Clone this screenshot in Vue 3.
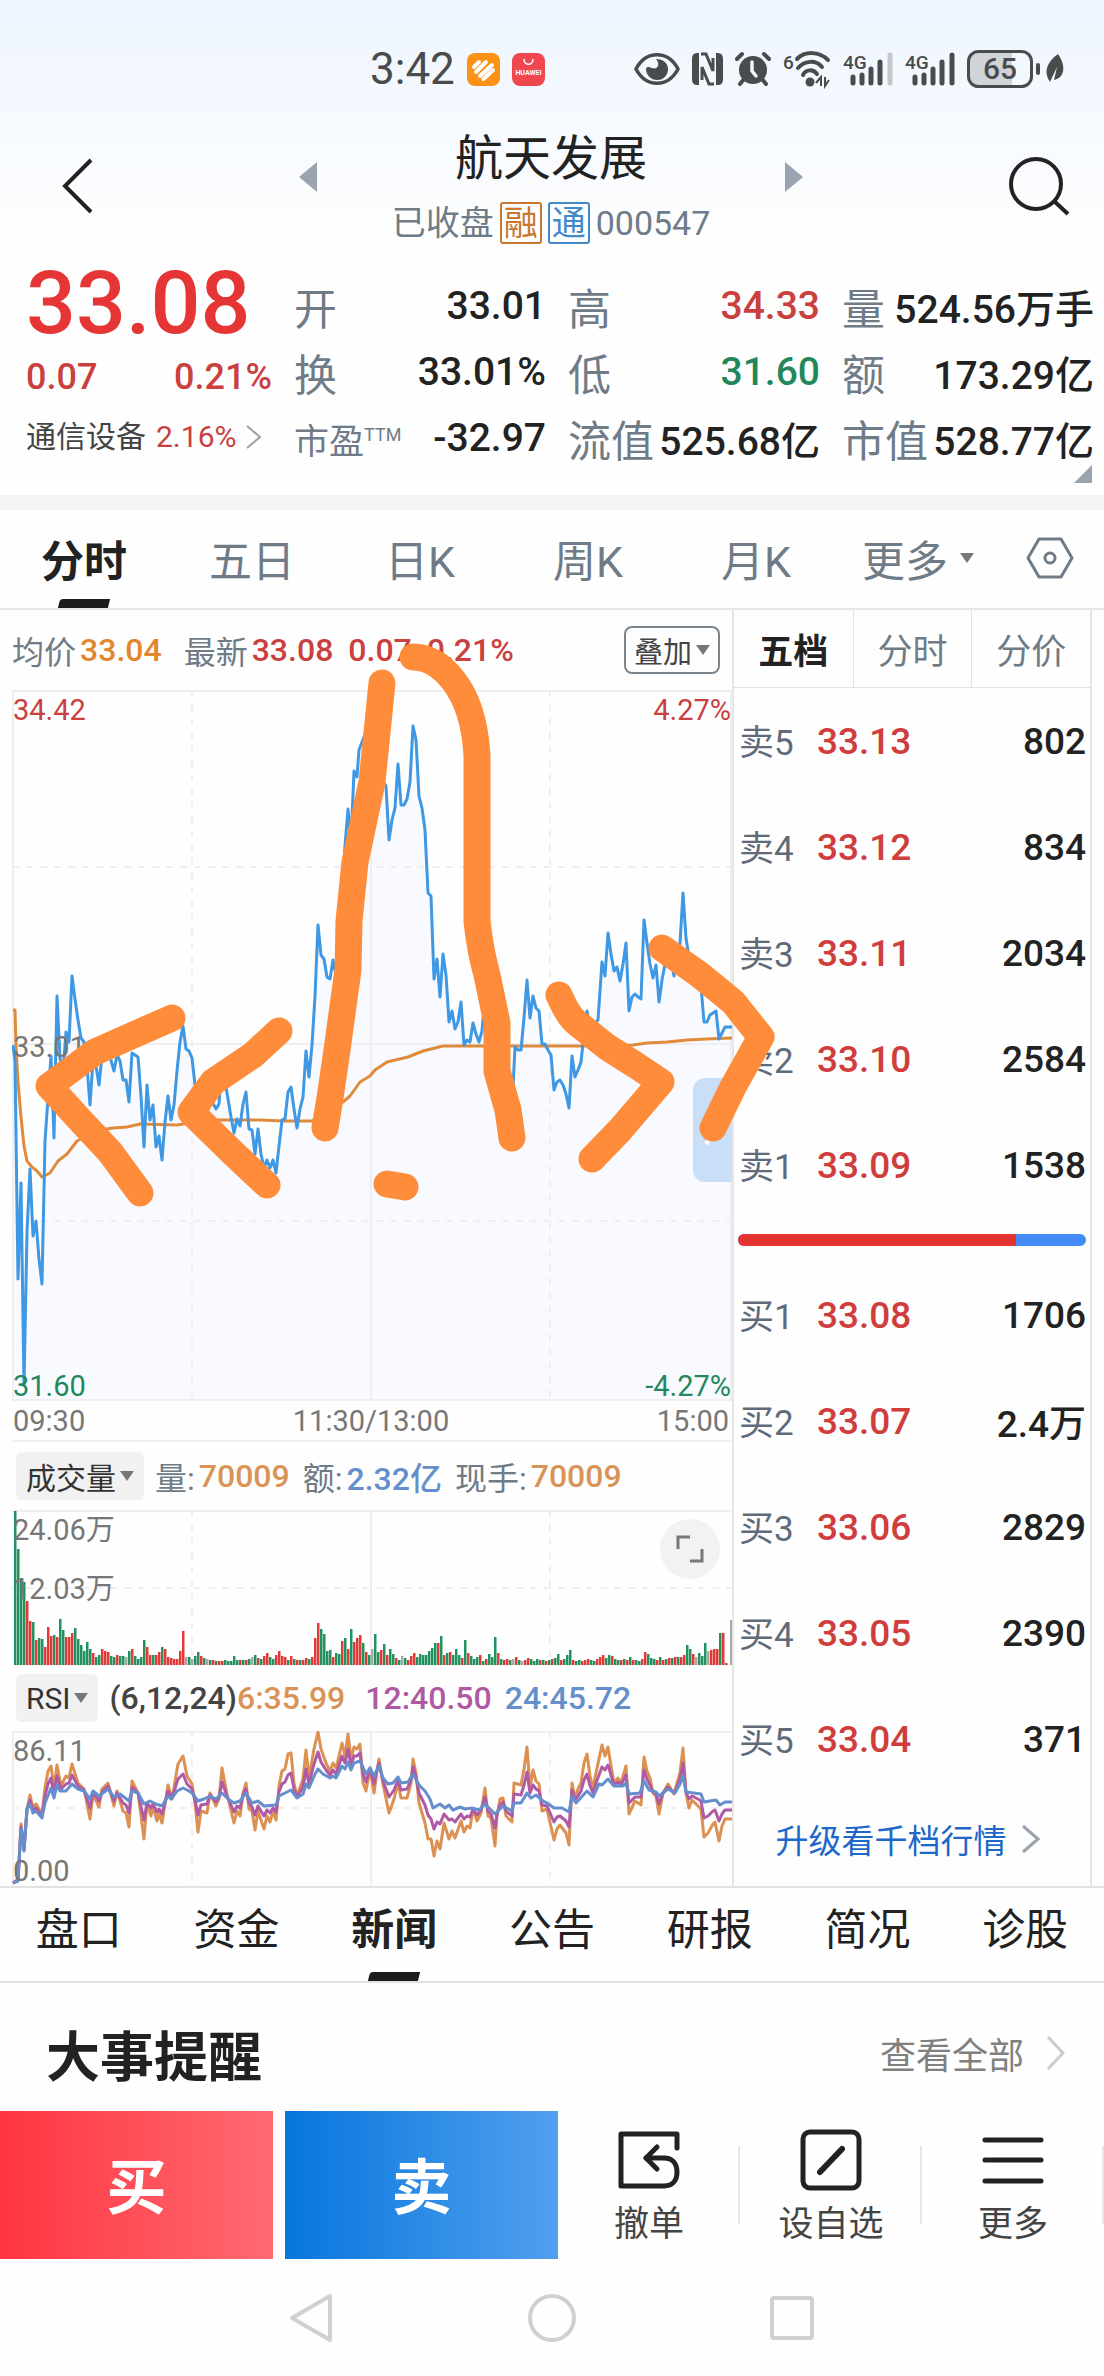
<template>
  <div class="page">
    <div class="top-area">
      <div class="status-bar">
        <div class="status-left">
          <span class="clock">3:42</span>
          <svg class="app-icon" width="33" height="33" viewBox="0 0 33 33">
            <rect width="33" height="33" rx="8" fill="#fb9214" />
            <path d="M7 14 L12 9 M9 19 L19 9 M13 23 L25 12 M16.500 26 L26 17" fill="none" stroke="#fff" stroke-width="4" stroke-linecap="round" />
          </svg>
          <svg class="app-icon" width="33" height="33" viewBox="0 0 33 33">
            <rect width="33" height="33" rx="8" fill="#f04650" />
            <path d="M12 6 C12 13 21 13 21 6" fill="none" stroke="#fff" stroke-width="1.500" />
            <text x="16.500" y="22" text-anchor="middle" font-size="7" font-weight="700" fill="#fff">HUAWEI</text>
          </svg>
        </div>
        <div class="status-right">
          <svg width="46" height="34" viewBox="0 0 46 34">
            <path d="M2 17 C12 -2 34 -2 44 17 C34 36 12 36 2 17 Z" fill="none" stroke="#4a4b4d" stroke-width="3.500" />
            <path d="M22 7 C27 13 23 18 18 16 C15 15 13 14 12 17 C12 23 17 28 23 28 C30 28 34 23 34 17 C34 11 29 7 22 7 Z" fill="#4a4b4d" />
          </svg>
          <svg width="31" height="34" viewBox="0 0 31 34">
            <path d="M7 1 L5 1 Q0 1 0 7 L0 27 Q0 33 5 33 L7 33 Z M24 1 L26 1 Q31 1 31 7 L31 27 Q31 33 26 33 L24 33 Z" fill="#4a4b4d" />
            <path d="M9 2 L14 2 L21 19 L21 6 M22 32 L17 32 L10 15 L10 28" fill="none" stroke="#4a4b4d" stroke-width="3" />
          </svg>
          <svg width="36" height="34" viewBox="0 0 36 34">
            <circle cx="18" cy="18" r="14" fill="#4a4b4d" />
            <path d="M2 7 L7 2 M34 7 L29 2 M5 32 L9 27 M31 32 L27 27" stroke="#4a4b4d" stroke-width="4" stroke-linecap="round" />
            <path d="M17 10 L17 19 L21 24" fill="none" stroke="#f3f7fd" stroke-width="3.500" stroke-linecap="round" />
          </svg>
          <svg width="48" height="36" viewBox="0 0 48 36">
            <text x="0" y="18" font-size="19" font-weight="500" fill="#4a4b4d">6</text>
            <path d="M14 8 C22 0 36 0 45 9 M15 17 C22 9 33 9 39 16 M20 24 C23 18 30 18 34 23" fill="none" stroke="#4a4b4d" stroke-width="4" stroke-linecap="round" />
            <circle cx="27" cy="31" r="4.500" fill="#4a4b4d" />
            <path d="M33 32 L38 26 L38 35 M42 26 L42 35 L46 29" fill="none" stroke="#4a4b4d" stroke-width="2" />
          </svg>
          <svg v-for="(last, i) in ['#c3c6cb', '#4a4b4d']" :key="i" width="50" height="36" viewBox="0 0 50 36">
            <text x="0" y="18" font-size="19" font-weight="500" fill="#4a4b4d">4G</text>
            <path d="M10 26 V32 M19 24 V32 M28 18 V32 M37 11 V32" stroke="#4a4b4d" stroke-width="5" stroke-linecap="round" />
            <path d="M47 4 V32" :stroke="last" stroke-width="5" stroke-linecap="round" />
          </svg>
          <svg width="97" height="38" viewBox="0 0 97 38">
            <path d="M10 3 H45 V35 H10 Q3 35 3 28 V10 Q3 3 10 3 Z" fill="#d0d3d8" />
            <rect x="1.500" y="1.500" width="63" height="35" rx="10" fill="none" stroke="#4a4b4d" stroke-width="3" />
            <rect x="69" y="13" width="4" height="12" rx="2" fill="#4a4b4d" />
            <text x="33" y="29" text-anchor="middle" font-size="30" font-weight="500" fill="#4a4b4d">65</text>
            <path d="M91 4 C100 17 97 28 87 30 L90 17 L83 32 C76 22 80 12 91 4 Z" fill="#4a4b4d" />
          </svg>
        </div>
      </div>

      <header class="header">
        <button class="icon-btn" aria-label="返回">
          <svg width="32" height="56" viewBox="0 0 32 56">
            <path d="M29 2 L3 28 L29 54" fill="none" stroke="#222" stroke-width="4" />
          </svg>
        </button>
        <div class="switcher">
          <button class="icon-btn arrow" aria-label="上一只">
            <svg width="18" height="30" viewBox="0 0 18 30"><path d="M18 0 V30 L0 15 Z" fill="#9aa3af" /></svg>
          </button>
          <div class="stock">
            <h1>航天发展</h1>
            <div class="stock-sub">
              <span>已收盘</span>
              <span class="tag tag-orange">融</span>
              <span class="tag tag-blue">通</span>
              <span>000547</span>
            </div>
          </div>
          <button class="icon-btn arrow" aria-label="下一只">
            <svg width="18" height="30" viewBox="0 0 18 30"><path d="M0 0 V30 L18 15 Z" fill="#9aa3af" /></svg>
          </button>
        </div>
        <button class="icon-btn" aria-label="搜索">
          <svg width="62" height="60" viewBox="0 0 62 60">
            <circle cx="28" cy="28" r="25" fill="none" stroke="#222" stroke-width="4" />
            <path d="M46 45 L60 58" stroke="#222" stroke-width="4" />
          </svg>
        </button>
      </header>
    </div>

    <section class="quote">
      <div class="quote-main">
        <div class="price">33.08</div>
        <div class="change"><span>0.07</span><span>0.21%</span></div>
        <a class="industry" href="#">
          <span>通信设备</span>
          <span class="industry-rate">2.16%</span>
          <svg width="16" height="24" viewBox="0 0 16 24"><path d="M1 1 L14 12 L1 23" fill="none" stroke="#9aa3ab" stroke-width="2" /></svg>
        </a>
      </div>
      <div v-for="(col, i) in stats" :key="i" class="stat-col">
        <div v-for="item in col" :key="item.label" class="stat">
          <span :class="['stat-label', { small: item.sup }]">{{ item.label }}<sup v-if="item.sup">{{ item.sup }}</sup></span>
          <span :class="['stat-value', item.tone]">{{ item.value }}</span>
        </div>
      </div>
      <svg class="expand-mark" width="18" height="18" viewBox="0 0 18 18"><path d="M18 0 V18 H0 Z" fill="#9aa3af" /></svg>
    </section>

    <nav class="period-tabs">
      <button v-for="name in periods" :key="name" :class="{ active: name === activePeriod }" @click="activePeriod = name">
        {{ name }}
      </button>
      <button class="more">更多<i class="caret"></i></button>
      <button class="setting" aria-label="设置">
        <svg width="48" height="44" viewBox="0 0 48 44">
          <path d="M13 3 H35 L46 22 L35 41 H13 L2 22 Z" fill="none" stroke="#6f7b86" stroke-width="3" stroke-linejoin="round" />
          <circle cx="24" cy="22" r="5" fill="none" stroke="#6f7b86" stroke-width="3" />
        </svg>
      </button>
    </nav>

    <main class="board">
      <div class="charts">
        <div class="chart-info">
          <span class="muted">均价</span><span class="avg">33.04</span>
          <span class="muted latest">最新</span><span class="red">33.08</span>
          <span class="red gap">0.07</span><span class="red gap">0.21%</span>
          <button class="overlay-btn">叠加<i class="caret"></i></button>
        </div>

        <div class="plot price-plot">
          <svg viewBox="0 0 720 711" preserveAspectRatio="none">
            <polygon :points="'0,711 ' + priceLine + ' 720,711'" fill="#f9faff" />
            <path class="grid" d="M0 1 H720 M1 0 V711 M719 0 V711 M359 0 V711 M0 354 H720 M0 710 H720" />
            <path class="grid dashed" d="M180 0 V711 M538 0 V711 M0 177 H720 M0 531 H720" />
            <polyline class="line" :points="averageLine" stroke="#e08a3c" />
            <polyline class="line" :points="priceLine" stroke="#3f98e3" />
          </svg>
          <span class="axis top left red">34.42</span>
          <span class="axis top right red">4.27%</span>
          <span class="axis middle left">33.01</span>
          <span class="axis bottom left green">31.60</span>
          <span class="axis bottom right green">-4.27%</span>
          <button class="drawer" aria-label="收起">
            <svg width="14" height="32" viewBox="0 0 14 32"><path d="M2 2 L12 16 L2 30" fill="none" stroke="#fff" stroke-width="4" /></svg>
          </button>
        </div>

        <div class="times"><span>09:30</span><span>11:30/13:00</span><span>15:00</span></div>

        <div class="indicator volume-head">
          <button class="pick">成交量<i class="caret"></i></button>
          <span class="muted">量:</span><span class="orange">70009</span>
          <span class="muted next">额:</span><span class="blue">2.32亿</span>
          <span class="muted next">现手:</span><span class="orange">70009</span>
        </div>
        <div class="plot small-plot">
          <svg viewBox="0 0 720 155" preserveAspectRatio="none">
            <path class="grid" d="M0 1 H720 M359 0 V155" />
            <path class="grid dashed" d="M180 0 V155 M538 0 V155 M0 78 H720" />
            <rect v-for="(bar, i) in volumeBars" :key="i" :x="bar.x" :y="155 - bar.h" width="2.500" :height="bar.h" :fill="bar.color" />
          </svg>
          <span class="axis top left">24.06万</span>
          <span class="axis middle left">12.03万</span>
          <button class="full-btn" aria-label="全屏">
            <svg width="28" height="28" viewBox="0 0 28 28"><path d="M2 14 V2 H14 M26 14 V26 H14" fill="none" stroke="#777" stroke-width="3" /></svg>
          </button>
        </div>

        <div class="indicator rsi-head">
          <button class="pick">RSI<i class="caret"></i></button>
          <span class="dark">(6,12,24)</span><span class="orange">6:35.99</span>
          <span class="purple rsi-next">12:40.50</span>
          <span class="blue next">24:45.72</span>
        </div>
        <div class="plot small-plot">
          <svg viewBox="0 0 720 155" preserveAspectRatio="none">
            <path class="grid" d="M0 1 H720 M1 0 V155 M359 0 V155" />
            <path class="grid dashed" d="M180 0 V155 M538 0 V155 M0 77 H720" />
            <polyline class="line" :points="rsi6" stroke="#dc9152" />
            <polyline class="line" :points="rsi12" stroke="#b05aa5" />
            <polyline class="line" :points="rsi24" stroke="#658fcc" />
          </svg>
          <span class="axis top left">86.11</span>
          <span class="axis bottom left">0.00</span>
        </div>
      </div>

      <aside class="depth">
        <div class="depth-tabs">
          <button v-for="name in depthTabs" :key="name" :class="{ active: name === activeDepth }" @click="activeDepth = name">
            {{ name }}
          </button>
        </div>
        <table>
          <tbody>
            <tr v-for="row in sells" :key="row[0]">
              <th scope="row">{{ row[0] }}</th>
              <td class="depth-price">{{ row[1] }}</td>
              <td class="depth-volume">{{ row[2] }}</td>
            </tr>
          </tbody>
        </table>
        <div class="ratio"><div class="ratio-bar"><i :style="{ width: sellRatio + '%' }"></i></div></div>
        <table>
          <tbody>
            <tr v-for="row in buys" :key="row[0]">
              <th scope="row">{{ row[0] }}</th>
              <td class="depth-price">{{ row[1] }}</td>
              <td class="depth-volume">{{ row[2] }}</td>
            </tr>
          </tbody>
        </table>
        <a class="upgrade" href="#">
          升级看千档行情
          <svg width="20" height="30" viewBox="0 0 20 30"><path d="M2 2 L17 15 L2 28" fill="none" stroke="#9aa3ab" stroke-width="3" /></svg>
        </a>
      </aside>

      <!-- 手绘标注 -->
      <svg class="marks" viewBox="0 610 1104 1276" preserveAspectRatio="none">
        <path v-for="d in marks" :key="d" :d="d" />
      </svg>
    </main>

    <nav class="news-tabs">
      <button v-for="name in sections" :key="name" :class="{ active: name === activeSection }" @click="activeSection = name">
        {{ name }}
      </button>
    </nav>

    <section class="events">
      <h2>大事提醒</h2>
      <a href="#">
        查看全部
        <svg width="20" height="36" viewBox="0 0 20 36"><path d="M2 2 L17 18 L2 34" fill="none" stroke="#ccc" stroke-width="3" /></svg>
      </a>
    </section>

    <footer class="actions">
      <button class="trade buy">买</button>
      <button class="trade sell">卖</button>
      <div class="tools">
        <button>
          <svg width="62" height="62" viewBox="0 0 62 62">
            <path d="M59 19 V5 H3 V57 H46 C55 57 59 51 59 43 C59 34 54 29 46 29 H28" fill="none" stroke="#222" stroke-width="5" stroke-linejoin="round" stroke-linecap="round" />
            <path d="M39 18 L28 29 L39 40" fill="none" stroke="#222" stroke-width="5" stroke-linejoin="round" stroke-linecap="round" />
          </svg>
          <span>撤单</span>
        </button>
        <button>
          <svg width="62" height="62" viewBox="0 0 62 62">
            <rect x="3" y="3" width="56" height="56" rx="7" fill="none" stroke="#222" stroke-width="5" />
            <path d="M20 43 L42 20" stroke="#222" stroke-width="6" stroke-linecap="round" />
          </svg>
          <span>设自选</span>
        </button>
        <button>
          <svg width="62" height="62" viewBox="0 0 62 62">
            <path d="M3 11 H59 M3 31 H59 M3 52 H59" stroke="#222" stroke-width="5" stroke-linecap="round" />
          </svg>
          <span>更多</span>
        </button>
      </div>
    </footer>

    <div class="system-nav">
      <button aria-label="返回">
        <svg width="48" height="52" viewBox="0 0 48 52"><path d="M42 4 V48 L4 26 Z" fill="none" stroke="#d0d0d0" stroke-width="4" stroke-linejoin="round" /></svg>
      </button>
      <button aria-label="主页">
        <svg width="52" height="52" viewBox="0 0 52 52"><circle cx="26" cy="26" r="22" fill="none" stroke="#d0d0d0" stroke-width="4" /></svg>
      </button>
      <button aria-label="最近任务">
        <svg width="48" height="52" viewBox="0 0 48 52"><rect x="4" y="6" width="40" height="40" rx="2" fill="none" stroke="#d0d0d0" stroke-width="4" /></svg>
      </button>
    </div>
  </div>
</template>

<script setup>
import { ref } from "vue";

const stats = [
  [
    { label: "开", value: "33.01" },
    { label: "换", value: "33.01%" },
    { label: "市盈", sup: "TTM", value: "-32.97" },
  ],
  [
    { label: "高", value: "34.33", tone: "red" },
    { label: "低", value: "31.60", tone: "green" },
    { label: "流值", value: "525.68亿" },
  ],
  [
    { label: "量", value: "524.56万手" },
    { label: "额", value: "173.29亿" },
    { label: "市值", value: "528.77亿" },
  ],
];

const periods = ["分时", "五日", "日K", "周K", "月K"];
const activePeriod = ref("分时");

const depthTabs = ["五档", "分时", "分价"];
const activeDepth = ref("五档");

const sections = ["盘口", "资金", "新闻", "公告", "研报", "简况", "诊股"];
const activeSection = ref("新闻");

// 五档盘口
const sells = [
  ["卖5", "33.13", "802"],
  ["卖4", "33.12", "834"],
  ["卖3", "33.11", "2034"],
  ["卖2", "33.10", "2584"],
  ["卖1", "33.09", "1538"],
];
const buys = [
  ["买1", "33.08", "1706"],
  ["买2", "33.07", "2.4万"],
  ["买3", "33.06", "2829"],
  ["买4", "33.05", "2390"],
  ["买5", "33.04", "371"],
];
const sellRatio = 80;

// 分时价格线
const priceLine =
  "1,355 3,371 6,589 9,493 12,695 15,542 18,479 21,546 24,531 27,569 30,594 33,451 36,408 39,366 42,448 45,306 48,368 51,381 54,342 57,352 " +
  "60,286 63,309 66,330 69,348 72,352 75,376 78,415 81,371 84,376 87,395 90,365 96,360 102,381 105,365 108,371 111,390 114,390 117,412 120,363 123,365 " +
  "126,367 129,406 132,457 135,395 138,430 141,415 144,457 147,446 150,470 153,432 156,406 159,430 162,415 165,381 168,352 171,336 174,359 177,361 180,368 " +
  "183,395 186,419 192,424 195,425 198,408 204,419 207,414 210,373 215,403 219,427 222,443 225,429 228,436 231,414 234,402 237,439 240,440 243,464 246,439 " +
  "249,464 252,478 255,470 258,478 261,470 264,483 267,456 270,430 273,429 276,402 279,397 282,419 285,438 288,419 291,407 294,361 297,387 300,355 303,306 " +
  "306,235 309,265 312,269 315,287 318,289 321,270 324,285 333,156 336,119 339,151 342,81 345,87 347,60 355,39 361,71 368,44 371,92 374,96 377,150 380,130 " +
  "383,118 386,74 389,115 392,115 395,109 398,92 401,36 404,50 407,106 410,118 413,140 416,203 419,206 422,289 425,269 428,307 431,264 434,285 437,332 " +
  "440,321 443,339 446,332 449,312 452,355 455,350 458,352 461,333 464,344 467,352 470,341 473,306 485,285 495,392 501,397 503,357 506,360 509,360 512,328 " +
  "515,290 518,328 521,306 524,318 527,321 530,354 533,354 536,360 539,365 542,400 545,392 548,390 551,395 554,404 557,418 560,366 563,387 566,380 569,372 " +
  "572,344 575,321 578,339 586,330 590,272 593,286 596,243 599,264 602,281 605,277 608,291 611,274 614,253 617,321 620,307 623,304 626,307 629,309 632,230 " +
  "635,253 638,274 641,288 644,275 647,312 650,290 653,274 658,264 662,286 668,253 671,203 674,248 678,274 689,296 692,332 695,332 698,325 704,321 707,349 " +
  "713,337 720,337";

// 均价线
const averageLine =
  "1,320 3,320 4,355 6,392 9,427 12,456 15,471 20,477 25,481 30,487 38,483 46,471 55,464 65,451 88,440 101,438 115,437 128,434 165,435 195,430 " +
  "248,430 271,431 300,431 331,412 338,406 348,392 358,386 363,380 375,372 396,367 411,361 431,356 571,356 621,355 635,353 655,352 675,350 695,349 720,348";

// 每分钟成交量：高度 + 涨跌颜色
const volumes =
  "154g 116g 87g 83g 64r 44r 43g 25r 27g 26g 18r 38r 29r 30g 28r 46g 35g 28r 28r 32r 37g 26g 20g 14g 23g 16g 12r 8g 10g 16r " +
  "14r 13r 9g 8g 10r 9g 9g 8x 14g 16r 9g 6g 8g 25g 18r 10r 10g 10r 13r 18g 16r 8r 7r 6r 6r 14r 34r 8x 8g 6x " +
  "9g 13g 9r 7g 6x 5g 5r 4g 4r 4r 5g 4g 4g 9g 5g 5r 5g 5r 6g 8x 10g 7r 6g 9r 12r 8g 6g 10r 14r 9r " +
  "8r 5g 9r 6g 5r 5g 5r 7r 6g 8r 27r 42r 36g 31g 14g 15g 8r 12g 11g 24r 27g 16r 36g 23r 27r 30r 22g 13r 10g 16x " +
  "31g 13g 15r 21g 10r 16g 11g 7r 5g 9x 7g 5r 9r 12r 8g 11g 10g 10g 14g 17g 22g 22r 29g 10r 12g 13r 10g 16g 10g 7r " +
  "25g 12r 9g 6g 8g 10r 4g 6r 11g 8g 28g 12r 6g 5r 6r 5g 6x 8r 5g 4x 5r 7r 6g 4g 6g 5r 5g 4r 5g 6r " +
  "7g 11g 5r 6g 10g 15g 5r 4g 5g 4r 5r 6r 5g 4g 6r 8r 10r 7g 10g 9r 6g 5g 5r 6g 5r 8g 5r 5g 4g 6r " +
  "13r 11g 7g 6g 5r 8g 5r 6g 7r 7g 8r 8g 8r 10r 20g 16g 11r 8x 12g 9g 22g 14x 15r 16r 16r 32g 32r 2r";

const barColors = { g: "#22915f", r: "#e03a38", x: "#a8a8a8" };

const volumeBars = volumes.split(" ").map((item, i) => ({
  x: 2 + i * 3,
  h: parseInt(item),
  color: barColors[item.slice(-1)],
}));
volumeBars.push({ x: 718, h: 45, color: barColors.x });

// RSI 三条线
const rsi6 =
  "1,152 6,148 9,93 12,118 15,78 18,64 21,77 24,73 30,83 33,57 36,40 39,35 42,57 45,34 49,55 54,45 57,47 60,33 66,52 72,58 78,88 81,63 87,76 90,58 96,52 " +
  "102,75 105,60 111,80 114,82 117,96 120,50 126,62 132,108 135,72 139,85 141,75 145,90 147,82 150,92 156,54 160,68 166,33 171,25 175,45 180,53 183,72 " +
  "186,101 189,80 195,82 198,62 204,75 207,68 210,37 215,63 222,92 225,80 228,85 231,62 234,52 237,78 240,80 243,99 246,80 252,98 255,85 258,91 261,80 " +
  "264,89 267,55 270,40 273,38 276,23 279,22 282,52 285,65 291,48 294,19 297,47 302,18 306,1 309,18 314,32 318,40 321,32 324,37 327,25 330,12 333,25 336,3 " +
  "339,28 342,16 345,18 348,13 351,52 354,60 358,38 362,62 365,40 367,28 371,53 377,82 382,68 386,52 389,67 395,67 399,52 401,28 404,42 407,72 413,92 " +
  "416,108 419,108 422,125 425,110 428,118 432,92 437,108 440,100 443,107 449,90 452,101 455,95 458,97 461,78 465,90 469,82 473,57 476,85 479,87 483,115 " +
  "485,85 488,68 491,67 494,85 500,91 502,52 509,54 512,38 515,16 518,57 521,39 524,50 527,53 530,80 535,78 542,109 545,98 548,94 554,102 557,114 560,52 " +
  "563,67 566,58 569,52 572,32 575,23 578,45 581,57 584,42 590,14 593,25 596,16 599,35 602,52 606,47 609,52 614,35 617,83 623,70 629,74 632,26 635,40 " +
  "638,47 641,62 644,65 647,83 651,62 656,53 662,63 665,52 668,42 671,17 674,62 677,77 680,69 686,75 689,78 692,106 696,102 701,93 703,91 707,110 710,95 " +
  "713,88 720,88";

const rsi24 =
  "1,152 6,150 9,98 12,120 15,78 18,73 21,82 24,80 30,87 33,72 39,57 42,67 45,54 48,60 54,60 60,53 66,58 72,60 78,68 81,60 87,65 96,58 102,66 108,63 117,70 " +
  "120,60 126,62 132,73 138,70 144,73 150,75 156,65 159,68 165,60 171,57 177,60 180,62 186,70 192,68 198,65 204,68 210,62 216,68 222,72 228,70 234,62 " +
  "240,72 246,70 252,75 264,74 267,65 273,62 279,59 285,67 291,63 294,53 297,57 303,43 306,38 311,43 318,47 321,45 324,47 330,35 333,38 336,31 339,39 " +
  "342,32 348,30 354,43 358,37 362,45 367,35 371,47 376,53 381,52 386,46 389,52 396,51 401,43 407,54 413,60 418,68 421,77 428,73 433,77 437,74 441,79 " +
  "448,76 453,78 460,77 467,79 473,73 483,83 491,75 500,80 502,72 509,72 515,62 519,67 524,64 531,70 535,72 542,77 550,77 557,81 560,65 564,72 575,60 " +
  "581,66 587,53 590,54 596,48 602,55 611,55 614,52 617,63 628,62 632,50 637,59 644,61 647,65 656,58 663,62 668,53 671,45 674,61 689,63 692,71 704,69 " +
  "708,74 713,71 720,71";

const toPoints = (line) => line.split(" ").map((p) => p.split(",").map(Number));

// 在折线上按 x 取 y
const valueAt = (points, x) => {
  const i = points.findIndex((p) => p[0] >= x);
  if (i <= 0) return points[0][1];
  const [x0, y0] = points[i - 1];
  const [x1, y1] = points[i];
  return y0 + ((y1 - y0) * (x - x0)) / (x1 - x0);
};

// RSI12 介于 RSI6 与 RSI24 之间
const slow = toPoints(rsi24);
const rsi12 = toPoints(rsi6)
  .map(([x, y]) => {
    const base = valueAt(slow, x);
    return `${x},${Math.round(base + (y - base) * 0.45)}`;
  })
  .join(" ");

const marks = [
  "M172 1018 L95 1052 L49 1086 L80 1120 L110 1152 L140 1193",
  "M279 1031 L253 1055 L213 1082 L191 1112 L233 1153 L267 1185",
  "M382 683 L372 782 L355 862 L349 921 L348 970 L337 1050 L330 1098 L325 1128",
  "M413 657 Q435 657 453 680 Q474 706 477 755 L477 921 Q480 950 487 975 L497 1023 L497 1071 L508 1110 L512 1138",
  "M387 1184 L405 1187",
  "M559 995 Q568 1016 577 1023 L607 1047 L637 1066 L661 1082 L620 1130 L592 1159",
  "M662 948 L700 975 L733 1002 L761 1037 L733 1087 L713 1128",
];
</script>

<style>
body {
  background: #fefefe;
}
</style>

<style scoped>
.page {
  font-family: Roboto, "Noto Sans CJK SC", sans-serif;
  color: #222;
  background: #fefefe;
  overflow: hidden;
}

.page * {
  box-sizing: border-box;
}

button {
  margin: 0;
  padding: 0;
  border: 0;
  background: none;
  font: inherit;
  color: inherit;
  cursor: pointer;
}

a {
  color: inherit;
  text-decoration: none;
}

h1,
h2 {
  margin: 0;
}

svg {
  display: block;
  flex: none;
}

.red {
  color: #c9403e;
}

.green {
  color: #23875c;
}

.orange {
  color: #d99356;
}

.blue {
  color: #648fcb;
}

.purple {
  color: #ae5aa3;
}

.dark {
  color: #444;
}

.muted {
  margin-right: 4px;
  color: #6f7b86;
  font-weight: 400;
}

.caret {
  display: inline-block;
  border: 7px solid transparent;
  border-top: 10px solid #777;
  border-bottom: 0;
}

.top-area {
  background: linear-gradient(#eef5ff, #fefefe);
}

.status-bar {
  display: flex;
  justify-content: space-between;
  align-items: center;
  height: 128px;
  padding: 10px 40px 0 370px;
}

.status-left,
.status-right {
  display: flex;
  align-items: center;
  gap: 12px;
}

.status-right svg {
  overflow: visible;
}

.clock {
  font-size: 44px;
  color: #4a4b4d;
}

.header {
  display: flex;
  justify-content: space-between;
  align-items: center;
  height: 116px;
  padding: 0 34px 0 62px;
}

.switcher {
  display: flex;
  justify-content: space-between;
  width: 504px;
}

.arrow {
  padding-bottom: 18px;
}

.stock {
  text-align: center;
}

.stock h1 {
  padding-top: 2px;
  font-size: 48px;
  line-height: 60px;
  font-weight: 400;
}

.stock-sub {
  display: flex;
  align-items: center;
  gap: 6px;
  margin-top: 12px;
  line-height: 44px;
  font-size: 34px;
  color: #6f7b86;
}

.tag {
  width: 42px;
  border: 2px solid;
  border-radius: 3px;
  line-height: 38px;
}

.tag-orange {
  color: #c9782d;
}

.tag-blue {
  color: #4189c7;
}

.quote {
  position: relative;
  display: grid;
  grid-template-columns: 246fr 252fr 252fr 252fr;
  gap: 22px;
  padding: 29px 10px 24px 26px;
  border-bottom: 15px solid #f4f4f4;
}

.price {
  font-size: 88px;
  line-height: 60px;
  font-weight: 500;
  color: #e53534;
}

.change {
  display: flex;
  justify-content: space-between;
  font-size: 36px;
  line-height: 88px;
  font-weight: 500;
  color: #c9403e;
}

.industry {
  display: flex;
  align-items: center;
  gap: 10px;
  font-size: 30px;
  line-height: 32px;
  color: #444;
  white-space: nowrap;
}

.industry-rate {
  color: #c9403e;
}

.stat {
  display: flex;
  justify-content: space-between;
  align-items: center;
  height: 66px;
  white-space: nowrap;
}

.stat-label {
  font-size: 43px;
  color: #6f7b86;
}

.stat-label.small {
  font-size: 35px;
}

.stat-label sup {
  font-size: 18px;
}

.stat-value {
  font-size: 39px;
  font-weight: 500;
}

.expand-mark {
  position: absolute;
  right: 12px;
  bottom: 12px;
}

.period-tabs {
  display: grid;
  grid-template-columns: repeat(5, 168fr) 156fr 108fr;
  height: 100px;
  border-bottom: 2px solid #e6e6e6;
  font-size: 43px;
  color: #6f7b86;
}

.period-tabs button {
  padding-bottom: 2px;
}

.more,
.setting {
  display: flex;
  align-items: center;
  justify-content: center;
  gap: 12px;
}

.active {
  position: relative;
  font-weight: 700;
  color: #222;
}

.period-tabs .active::after,
.news-tabs .active::after {
  content: "";
  position: absolute;
  left: 50%;
  bottom: 0;
  width: 50px;
  height: 9px;
  margin-left: -25px;
  border-radius: 3px 0 0 0;
  background: #1c1c1c;
  transform: skewX(-14deg);
}

.board {
  position: relative;
  display: grid;
  grid-template-columns: 2fr 1fr;
  padding: 0 12px;
}

.charts {
  min-width: 0;
}

.chart-info {
  display: flex;
  align-items: center;
  height: 80px;
  font-size: 32px;
  font-weight: 500;
}

.avg {
  color: #e2872f;
}

.latest {
  margin-left: 22px;
}

.gap {
  margin-left: 15px;
}

.overlay-btn {
  display: flex;
  align-items: center;
  justify-content: center;
  gap: 4px;
  width: 96px;
  height: 48px;
  margin-left: auto;
  margin-right: 12px;
  border: 2px solid #7b858e;
  border-radius: 8px;
  font-size: 29px;
  font-weight: 400;
  color: #444;
}

.plot {
  position: relative;
}

.plot > svg {
  width: 100%;
  height: 100%;
}

.price-plot {
  height: 711px;
}

.small-plot {
  height: 155px;
}

.grid {
  fill: none;
  stroke: #efeff1;
  stroke-width: 2;
}

.dashed {
  stroke-dasharray: 7 7;
}

.line {
  fill: none;
  stroke-width: 3;
  stroke-linejoin: round;
}

.axis {
  position: absolute;
  font-size: 29px;
  line-height: 34px;
  color: #777;
}

.axis.red {
  color: #c9403e;
}

.axis.green {
  color: #23875c;
}

.left {
  left: 1px;
}

.right {
  right: 1px;
}

.top {
  top: 3px;
}

.middle {
  top: 50%;
  margin-top: -16px;
}

.bottom {
  bottom: -2px;
}

.drawer {
  position: absolute;
  right: 0;
  top: 388px;
  width: 39px;
  height: 104px;
  padding-left: 11px;
  border-radius: 12px 0 0 12px;
  background: #c8dff7;
}

.times {
  display: flex;
  justify-content: space-between;
  height: 41px;
  padding: 0 3px 0 1px;
  border-bottom: 2px solid #f0f0f0;
  font-size: 29px;
  line-height: 40px;
  color: #777;
}

.indicator {
  display: flex;
  align-items: center;
  padding-left: 4px;
  font-size: 32px;
  font-weight: 500;
  white-space: nowrap;
}

.volume-head {
  height: 68px;
}

.rsi-head {
  height: 66px;
}

.pick {
  display: flex;
  align-items: center;
  gap: 4px;
  height: 48px;
  margin-right: 11px;
  padding: 0 10px;
  border-radius: 6px;
  background: #f1f1f1;
  font-size: 30px;
  font-weight: 400;
  color: #333;
}

.next {
  margin-left: 13px;
}

.rsi-next {
  margin-left: 20px;
}

.full-btn {
  position: absolute;
  top: 9px;
  right: 12px;
  display: flex;
  align-items: center;
  justify-content: center;
  width: 60px;
  height: 60px;
  border-radius: 50%;
  background: #f2f2f2;
}

.depth {
  border-left: 2px solid #e6e6e6;
  border-right: 2px solid #e6e6e6;
}

.depth-tabs {
  display: grid;
  grid-template-columns: repeat(3, 1fr);
  height: 78px;
  border-bottom: 1px solid #e2e2e2;
  font-size: 35px;
  color: #6f7b86;
}

.depth-tabs button + button {
  border-left: 1px solid #e2e2e2;
}

.depth table {
  width: 100%;
  border-collapse: collapse;
}

.depth tr {
  height: 106px;
}

.depth th,
.depth td {
  padding: 0;
  text-align: left;
  font-size: 37px;
  font-weight: 500;
}

.depth th {
  width: 83px;
  padding: 0 0 4px 5px;
  font-size: 35px;
  font-weight: 400;
  color: #5f6b78;
}

.depth td.depth-price {
  color: #cf3d3c;
}

.depth td.depth-volume {
  padding-right: 4px;
  text-align: right;
}

.ratio {
  display: flex;
  align-items: center;
  height: 44px;
  padding: 0 4px;
}

.ratio-bar {
  flex: 1;
  height: 12px;
  border-radius: 6px;
  overflow: hidden;
  background: #448cf8;
}

.ratio-bar i {
  display: block;
  height: 100%;
  background: #e53332;
}

.upgrade {
  display: flex;
  align-items: center;
  justify-content: center;
  gap: 14px;
  height: 93px;
  padding-right: 8px;
  font-size: 33px;
  color: #1d68c8;
  white-space: nowrap;
}

.marks {
  position: absolute;
  left: 0;
  top: 0;
  width: 100%;
  height: 100%;
  pointer-events: none;
}

.marks path {
  fill: none;
  stroke: #ff8c3a;
  stroke-width: 27;
  stroke-linecap: round;
  stroke-linejoin: round;
}

.news-tabs {
  display: grid;
  grid-template-columns: repeat(7, 1fr);
  height: 97px;
  border-top: 2px solid #e2e2e2;
  border-bottom: 2px solid #e2e2e2;
  font-size: 43px;
}

.news-tabs button {
  padding-bottom: 18px;
}

.events {
  display: flex;
  justify-content: space-between;
  align-items: center;
  height: 128px;
  padding: 12px 38px 0 46px;
}

.events h2 {
  font-size: 54px;
  font-weight: 700;
}

.events a {
  display: flex;
  align-items: center;
  gap: 22px;
  font-size: 36px;
  color: #808080;
}

.actions {
  display: grid;
  grid-template-columns: 273fr 273fr 534fr;
  column-gap: 12px;
  height: 148px;
}

.trade {
  padding-bottom: 5px;
  font-size: 60px;
  font-weight: 700;
  color: #fff;
}

.buy {
  background: linear-gradient(90deg, #ff3540, #ff6a72);
}

.sell {
  background: linear-gradient(90deg, #0676dd, #529fee);
}

.tools {
  display: grid;
  grid-template-columns: repeat(3, 1fr);
  margin-left: -12px;
}

.tools button {
  position: relative;
  display: flex;
  flex-direction: column;
  align-items: center;
  justify-content: center;
  gap: 12px;
  padding-top: 6px;
  font-size: 35px;
  line-height: 44px;
  color: #444;
}

.tools button::after {
  content: "";
  position: absolute;
  right: 0;
  top: 35px;
  bottom: 35px;
  width: 2px;
  background: #e8e8e8;
}

.system-nav {
  display: flex;
  justify-content: center;
  align-items: center;
  gap: 190px;
  height: 117px;
}
</style>
